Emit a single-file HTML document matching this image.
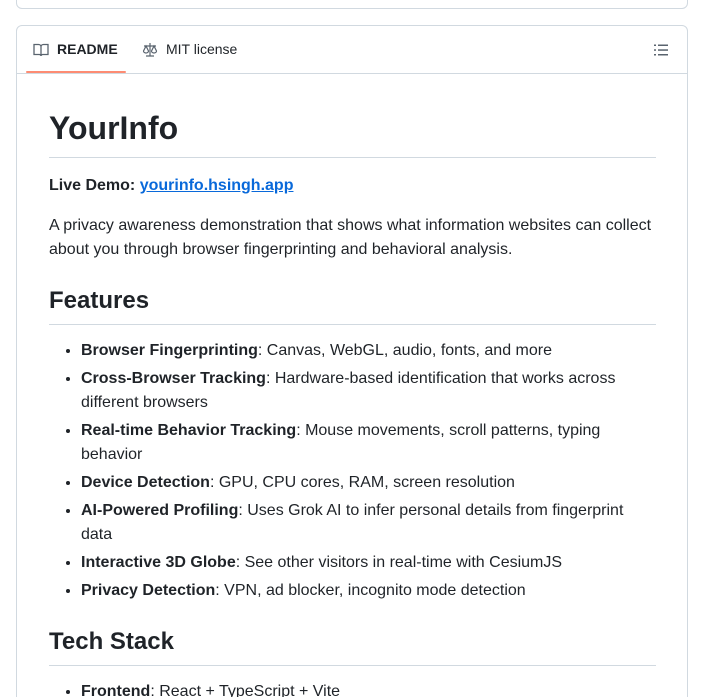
<!DOCTYPE html>
<html style="overflow:hidden;height:697px"><head><style>
*{box-sizing:border-box;margin:0;padding:0}
body{width:704px;height:697px;overflow:hidden;background:#fff;font-family:"Liberation Sans",Arial,sans-serif;color:#1f2328;font-size:16px;line-height:24px;position:relative}
.top{position:absolute;left:16px;top:-10px;width:672px;height:19px;border:1px solid #d1d9e0;border-radius:6px}
.card{position:absolute;left:16px;top:25px;width:672px;height:690px;border:1px solid #d1d9e0;border-radius:6px;overflow:hidden}
.tabs{height:48px;border-bottom:1px solid #d1d9e0;position:relative;font-size:14px}
.tab{position:absolute;top:13px;display:flex;align-items:center;gap:8px;line-height:21px}
.ul{position:absolute;left:9px;top:45px;width:100px;height:2px;background:#fd8c73;border-radius:2px}
.content{position:absolute;left:32px;top:50px;width:607px}
h1{font-size:32px;line-height:40px;font-weight:600;margin-top:32px;padding-bottom:9px;border-bottom:1px solid #d1d9e0}
h2{font-size:24px;line-height:30px;font-weight:600;padding-bottom:8px;border-bottom:1px solid #d1d9e0}
p{margin-bottom:16px}
a{color:#0969da;font-weight:bold;text-decoration:underline}
ul{padding-left:32px;margin:14px 0 16px}
li{margin-bottom:4px}
</style></head><body>
<div class="top"></div>
<div class="card">
<div class="tabs">
<div class="tab" style="left:16px;font-weight:bold">
<svg width="16" height="16" viewBox="0 0 16 16" fill="none" stroke="#59636e" stroke-width="1.3"><path d="M1 2.5h4.5c1.4 0 2.5 1 2.5 2.3V14c0-.9-.8-1.5-1.8-1.5H1z M15 2.5h-4.5C9.1 2.5 8 3.5 8 4.8V14c0-.9.8-1.5 1.8-1.5H15z"/></svg>README</div>
<div class="tab" style="left:125px">
<svg width="16" height="16" viewBox="0 0 16 16" fill="none" stroke="#59636e" stroke-width="1.2"><path d="M8 1v13M4 14h8M2 4h12M4 4l-2.5 5a2.5 2 0 0 0 5 0zM12 4l-2.5 5a2.5 2 0 0 0 5 0z"/></svg>MIT license</div>
<svg style="position:absolute;right:18px;top:16px" width="16" height="16" viewBox="0 0 16 16" fill="#59636e"><rect x="1" y="2.5" width="2" height="1.5"/><rect x="5" y="2.5" width="10" height="1.5"/><rect x="1" y="7.3" width="2" height="1.5"/><rect x="5" y="7.3" width="10" height="1.5"/><rect x="1" y="12" width="2" height="1.5"/><rect x="5" y="12" width="10" height="1.5"/></svg>
<div class="ul"></div>
</div>
<div class="content">
<h1>YourInfo</h1>
<p style="margin-top:16px"><b>Live Demo:</b> <a>yourinfo.hsingh.app</a></p>
<p>A privacy awareness demonstration that shows what information websites can collect about you through browser fingerprinting and behavioral analysis.</p>
<h2 style="margin-top:24px">Features</h2>
<ul>
<li><b>Browser Fingerprinting</b>: Canvas, WebGL, audio, fonts, and more</li>
<li><b>Cross-Browser Tracking</b>: Hardware-based identification that works across different browsers</li>
<li><b>Real-time Behavior Tracking</b>: Mouse movements, scroll patterns, typing behavior</li>
<li><b>Device Detection</b>: GPU, CPU cores, RAM, screen resolution</li>
<li><b>AI-Powered Profiling</b>: Uses Grok AI to infer personal details from fingerprint data</li>
<li><b>Interactive 3D Globe</b>: See other visitors in real-time with CesiumJS</li>
<li><b>Privacy Detection</b>: VPN, ad blocker, incognito mode detection</li>
</ul>
<h2 style="margin-top:24px">Tech Stack</h2>
<ul style="margin-bottom:0">
<li style="margin-bottom:0"><b>Frontend</b>: React + TypeScript + Vite</li>
</ul>
</div>
</div>
</body></html>
